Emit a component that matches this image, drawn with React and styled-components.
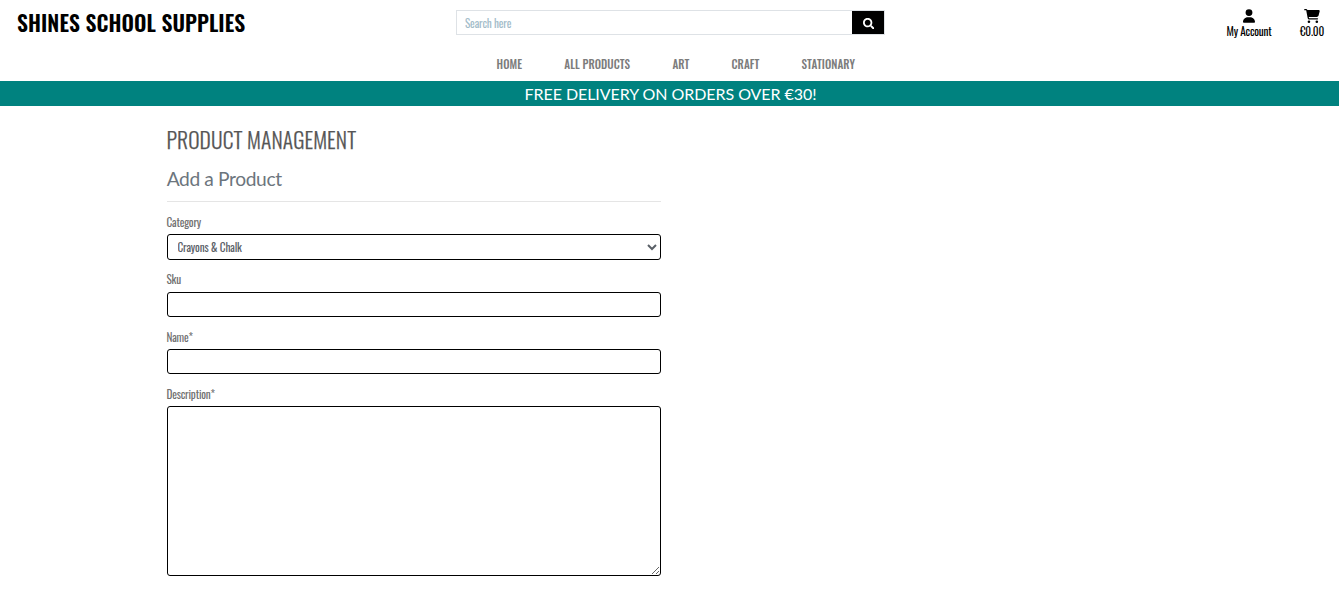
import React from "react";
import styled, { createGlobalStyle } from "styled-components";
import { FaCartShopping, FaUser } from "react-icons/fa6";
import { FaSearch } from "react-icons/fa";

const GlobalStyle = createGlobalStyle`
  * { box-sizing: border-box; }
  body { margin: 0; background: #fff; overflow: hidden; font-family: Oswald, Roboto, sans-serif; font-size: 11.2px; font-weight: 400; color: #555; }
`;

const Header = styled.header`
  display: grid;
  grid-template-columns: 456px 429px 1fr;
  height: 46px;
`;
const Brand = styled.h1`
  margin: 0;
  padding: 8px 0 0 17px;
  font-size: 21.6px;
  line-height: 29px;
  font-weight: 600;
  letter-spacing: 0.08px;
  color: #000;
`;
const Search = styled.form`
  display: flex;
  height: 25px;
  margin-top: 10px;
  border: 1px solid #dee2e6;
`;
const SearchField = styled.input`
  flex: 1;
  padding: 0 0 0 8px;
  border: 0;
  font: inherit;
  letter-spacing: -0.18px;
  &::placeholder { color: #a3bcc9; }
`;
const SearchButton = styled.button`
  display: flex;
  align-items: center;
  justify-content: center;
  width: 32px;
  padding: 2px 0 0 1px;
  border: 0;
  background: #000;
  color: #fff;
  font-size: 11.5px;
`;
const Actions = styled.div`
  display: flex;
  justify-content: flex-end;
  gap: 28.5px;
  padding: 9px 15px 0 0;
`;
const Action = styled.a`
  display: flex;
  flex-direction: column;
  align-items: center;
  color: #000;
  line-height: 17px;
  letter-spacing: -0.2px;
  svg { display: block; width: ${(p) => p.$icon}px; height: 14px; }
`;
const Nav = styled.nav`
  display: flex;
  gap: 42.2px;
  height: 35px;
  padding: 8px 0 0 496.6px;
  line-height: 20px;
  font-weight: 500;
  letter-spacing: 0.05px;
  color: #7c7c7c;
`;
const Banner = styled.div`
  height: 25px;
  padding-left: 2px;
  background: #00827f;
  color: #fff;
  font: 16px/26px Lato, sans-serif;
  letter-spacing: -0.06px;
  text-align: center;
`;
const Main = styled.main`
  width: 494px;
  margin-left: 167px;
  padding-top: 18px;
`;
const Heading = styled.h2`
  margin: 0 0 0 -0.5px;
  height: 32px;
  font-size: 21.6px;
  line-height: 31px;
  font-weight: 300;
  letter-spacing: 0.1px;
  color: #555;
  -webkit-text-stroke: 0.25px #555;
`;
const SubHeading = styled.h3`
  margin: 0 0 0 -0.3px;
  height: 46px;
  padding-top: 11px;
  border-bottom: 1px solid #e5e5e5;
  font: 400 19.2px/24px Lato, sans-serif;
  letter-spacing: -0.38px;
  color: #6c757d;
`;
const Field = styled.div`
  padding-top: 10px;
`;
const Label = styled.label`
  display: block;
  height: 22px;
  margin-left: -0.5px;
  line-height: ${(p) => p.$line || 20}px;
  letter-spacing: -0.2px;
  color: #707070;
`;
const Select = styled.select`
  display: block;
  width: 100%;
  height: 26px;
  padding: 0 1px 0 5.5px;
  border: 1px solid #000;
  border-radius: 3px;
  background: #fff;
  font: inherit;
  letter-spacing: -0.16px;
  color: #5a6067;
`;
const Input = styled.input`
  display: block;
  width: 100%;
  height: 25px;
  border: 1px solid #000;
  border-radius: 3px;
`;
const TextArea = styled.textarea`
  display: block;
  width: 100%;
  height: 170px;
  border: 1px solid #000;
  border-radius: 3px;
  background: #fff;
`;

const LINKS = ["HOME", "ALL PRODUCTS", "ART", "CRAFT", "STATIONARY"];

export default function App() {
  return (
    <>
      <GlobalStyle />
      <Header>
        <Brand>SHINES SCHOOL SUPPLIES</Brand>
        <Search>
          <SearchField placeholder="Search here" />
          <SearchButton type="button" aria-label="Search"><FaSearch /></SearchButton>
        </Search>
        <Actions>
          <Action $icon={12}><FaUser />My Account</Action>
          <Action $icon={16}><FaCartShopping />€0.00</Action>
        </Actions>
      </Header>
      <Nav>{LINKS.map((text) => <span key={text}>{text}</span>)}</Nav>
      <Banner>FREE DELIVERY ON ORDERS OVER €30!</Banner>
      <Main>
        <Heading>PRODUCT MANAGEMENT</Heading>
        <SubHeading>Add a Product</SubHeading>
        <Field>
          <Label>Category</Label>
          <Select><option>Crayons &amp; Chalk</option></Select>
        </Field>
        <Field>
          <Label $line={18}>Sku</Label>
          <Input />
        </Field>
        <Field>
          <Label>Name*</Label>
          <Input />
        </Field>
        <Field>
          <Label>Description*</Label>
          <TextArea />
        </Field>
      </Main>
    </>
  );
}
